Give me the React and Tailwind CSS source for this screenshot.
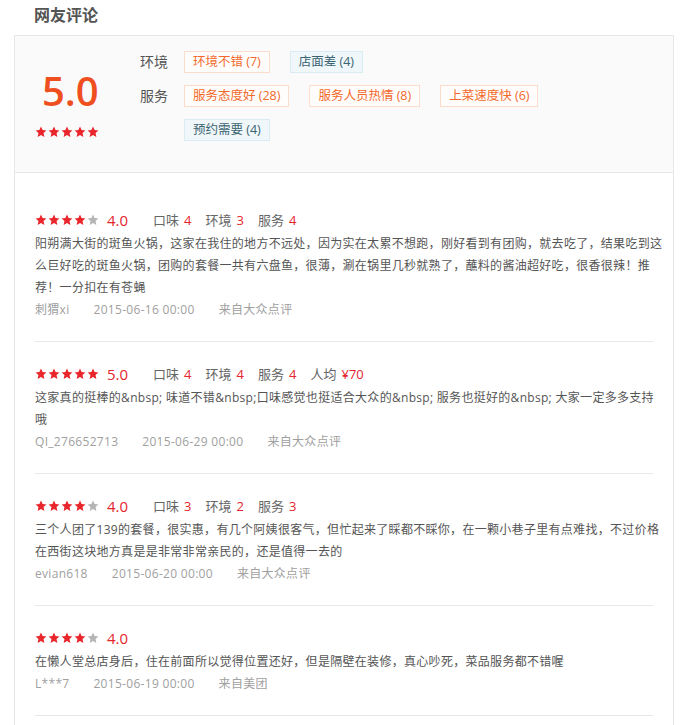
import React from "react";

const FONT = "font-['Open_Sans','Noto_Sans_CJK_SC',sans-serif]";

function Star({ on }) {
  return (
    <svg width="12" height="12" viewBox="0 0 24 24" className="block">
      <polygon
        points="12,1.2 15.2,8.2 22.8,9 17.1,14.2 18.7,21.8 12,17.9 5.3,21.8 6.9,14.2 1.2,9 8.8,8.2"
        fill={on ? "#e8262c" : "#b5b5b5"}
      />
    </svg>
  );
}

function Stars({ n }) {
  return (
    <div className="flex gap-[1px]">
      {[0, 1, 2, 3, 4].map((i) => (
        <Star key={i} on={i < n} />
      ))}
    </div>
  );
}

function Tag({ children, blue }) {
  return (
    <span
      className={
        blue
          ? "h-[22px] px-[8px] flex items-center text-[12.5px] border border-[#d9ecf2] bg-[#eff7fa] text-[#3b6472]"
          : "h-[22px] px-[8px] flex items-center text-[12.5px] border border-[#fbdccd] bg-[#fffdfc] text-[#f2692a]"
      }
    >
      {children}
    </span>
  );
}

const reviews = [
  {
    stars: 4,
    score: "4.0",
    items: [
      ["口味", "4"],
      ["环境", "3"],
      ["服务", "4"],
    ],
    lines: [
      "阳朔满大街的斑鱼火锅，这家在我住的地方不远处，因为实在太累不想跑，刚好看到有团购，就去吃了，结果吃到这",
      "么巨好吃的斑鱼火锅，团购的套餐一共有六盘鱼，很薄，涮在锅里几秒就熟了，蘸料的酱油超好吃，很香很辣！推",
      "荐！一分扣在有苍蝇",
    ],
    user: "刺猬xi",
    date: "2015-06-16 00:00",
    src: "来自大众点评",
  },
  {
    stars: 5,
    score: "5.0",
    items: [
      ["口味", "4"],
      ["环境", "4"],
      ["服务", "4"],
      ["人均", "¥70"],
    ],
    lines: [
      "这家真的挺棒的&nbsp; 味道不错&nbsp;口味感觉也挺适合大众的&nbsp; 服务也挺好的&nbsp; 大家一定多多支持",
      "哦",
    ],
    user: "QI_276652713",
    date: "2015-06-29 00:00",
    src: "来自大众点评",
  },
  {
    stars: 4,
    score: "4.0",
    items: [
      ["口味", "3"],
      ["环境", "2"],
      ["服务", "3"],
    ],
    lines: [
      "三个人团了139的套餐，很实惠，有几个阿姨很客气，但忙起来了睬都不睬你，在一颗小巷子里有点难找，不过价格",
      "在西街这块地方真是是非常非常亲民的，还是值得一去的",
    ],
    user: "evian618",
    date: "2015-06-20 00:00",
    src: "来自大众点评",
  },
  {
    stars: 4,
    score: "4.0",
    items: [],
    lines: [
      "在懒人堂总店身后，住在前面所以觉得位置还好，但是隔壁在装修，真心吵死，菜品服务都不错喔",
    ],
    user: "L***7",
    date: "2015-06-19 00:00",
    src: "来自美团",
  },
];

function Review({ r }) {
  return (
    <li className="pt-[22px] pb-[20px] border-b border-[#e8e8e8]">
      <div className="h-[20px] flex items-center">
        <Stars n={r.stars} />
        <span className="ml-2 text-[15px] leading-[20px] text-[#e4262e]">{r.score}</span>
        <div className="ml-[25px] flex items-center gap-[14px] text-[13px] leading-[20px]">
          {r.items.map(([k, v]) => (
            <span key={k} className="flex items-center">
              <span className="text-[#666]">{k}</span>
              <span className="ml-[5px] text-[#e4262e]">{v}</span>
            </span>
          ))}
        </div>
      </div>
      <div className="mt-[3px] text-[12px] tracking-[0.3px] leading-[22px] text-[#555]">
        {r.lines.map((l, i) => (
          <div key={i} className="whitespace-nowrap">
            {l}
          </div>
        ))}
      </div>
      <div className="flex text-[12px] tracking-[0.3px] leading-[22px] text-[#a0a0a0] gap-6">
        <span>{r.user}</span>
        <span>{r.date}</span>
        <span>{r.src}</span>
      </div>
    </li>
  );
}

export default function App() {
  return (
    <div className={`${FONT} bg-white w-[688px] min-h-[725px] pl-[14px]`}>
      <div className="h-[35px] pt-[3px] pl-[20px] text-[16px] leading-[24px] font-bold text-[#555]">
        网友评论
      </div>
      <div className="w-[660px] border border-[#e6e6e6]">
        <div className="bg-[#fafafa] border-b border-[#e6e6e6] flex items-start pt-[15px] pb-[31px] pl-[20px]">
          <div className="w-[105px] flex flex-col mt-[20px]">
            <div className="ml-[7px] text-[40px] leading-[40px] font-semibold text-[#ef4f1e]">5.0</div>
            <div className="mt-[15px]">
              <Stars n={5} />
            </div>
          </div>
          <div className="flex flex-col gap-3">
            <div className="flex">
              <span className="w-[44px] text-[14px] leading-[22px] text-[#555]">环境</span>
              <div className="w-[380px] flex flex-wrap gap-x-5 gap-y-3">
                <Tag>环境不错 (7)</Tag>
                <Tag blue>店面差 (4)</Tag>
              </div>
            </div>
            <div className="flex">
              <span className="w-[44px] text-[14px] leading-[22px] text-[#555]">服务</span>
              <div className="w-[380px] flex flex-wrap gap-x-5 gap-y-3">
                <Tag>服务态度好 (28)</Tag>
                <Tag>服务人员热情 (8)</Tag>
                <Tag>上菜速度快 (6)</Tag>
                <Tag blue>预约需要 (4)</Tag>
              </div>
            </div>
          </div>
        </div>
        <ul className="px-5 pt-[15px] pb-[40px]">
          {reviews.map((r, i) => (
            <Review key={i} r={r} />
          ))}
        </ul>
      </div>
    </div>
  );
}
